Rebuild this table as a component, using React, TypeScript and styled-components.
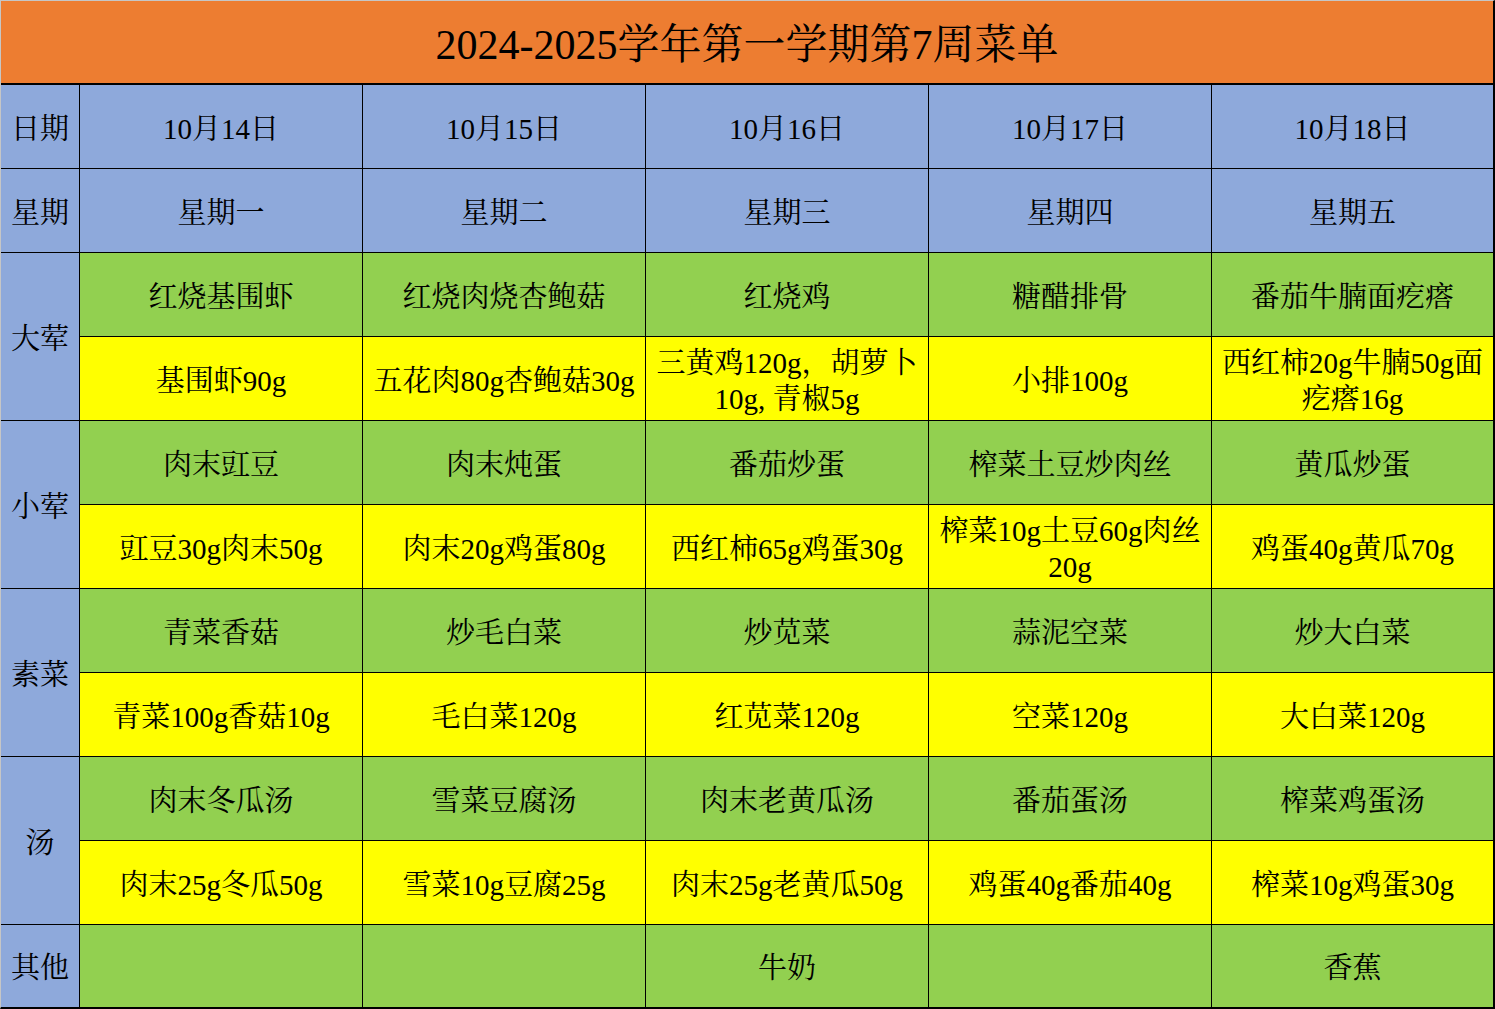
import React from "react";
import styled, { createGlobalStyle } from "styled-components";

const Global = createGlobalStyle`
  html, body { margin: 0; padding: 0; background: #ffffff; }
  body {
    font-family: "Liberation Serif", "Noto Serif CJK SC", "Noto Sans CJK SC", serif;
    color: #000;
  }
`;

const Sheet = styled.div`
  width: 1495px;
  height: 1009px;
  box-sizing: border-box;
  border-top: 1px solid #c6c6c6;
  border-left: 1px solid #c6c6c6;
  border-right: 2px solid #000;
  border-bottom: 2px solid #000;
  display: flex;
  flex-direction: column;
  overflow: hidden;
`;

const Title = styled.div`
  flex: 0 0 auto;
  height: 84px;
  box-sizing: border-box;
  border-bottom: 2px solid #000;
  background: #ed7d31;
  display: flex;
  align-items: center;
  justify-content: center;
  font-size: 42px;
  line-height: 50px;
  padding-top: 6px;
`;

const Grid = styled.div`
  display: grid;
  grid-template-columns: 78px 282px 282px 282px 282px 281px;
  grid-template-rows: repeat(10, 83px) 82px;
  gap: 1px;
  background: #000;
`;

type Tone = "blue" | "green" | "yellow";
const tones: Record<Tone, string> = {
  blue: "#8ea9db",
  green: "#92d050",
  yellow: "#ffff00",
};

const Cell = styled.div<{ $tone: Tone; $span?: number }>`
  background: ${(p) => tones[p.$tone]};
  grid-row: ${(p) => (p.$span ? `span ${p.$span}` : "auto")};
  display: flex;
  flex-direction: column;
  align-items: center;
  justify-content: center;
  text-align: center;
  font-size: 29px;
  line-height: 36px;
  padding: 4px 0 0;
  box-sizing: border-box;
  white-space: nowrap;
  overflow: hidden;
`;

const Line = styled.span`
  display: block;
`;

const Latin = styled.span`
  font-family: "Liberation Serif", "Times New Roman", serif;
`;

function Mixed({ text }: { text: string }) {
  const parts = text.split(/([\x20-\x7e]+)/).filter((s) => s.length > 0);
  return (
    <Line>
      {parts.map((p, i) =>
        /^[\x20-\x7e]+$/.test(p) ? <Latin key={i}>{p}</Latin> : <React.Fragment key={i}>{p}</React.Fragment>
      )}
    </Line>
  );
}

const days = ["10月14日", "10月15日", "10月16日", "10月17日", "10月18日"];
const weekdays = ["星期一", "星期二", "星期三", "星期四", "星期五"];

type Group = { label: string; names: string[]; details: string[][] };

const groups: Group[] = [
  {
    label: "大荤",
    names: ["红烧基围虾", "红烧肉烧杏鲍菇", "红烧鸡", "糖醋排骨", "番茄牛腩面疙瘩"],
    details: [
      ["基围虾90g"],
      ["五花肉80g杏鲍菇30g"],
      ["三黄鸡120g，胡萝卜", "10g, 青椒5g"],
      ["小排100g"],
      ["西红柿20g牛腩50g面", "疙瘩16g"],
    ],
  },
  {
    label: "小荤",
    names: ["肉末豇豆", "肉末炖蛋", "番茄炒蛋", "榨菜土豆炒肉丝", "黄瓜炒蛋"],
    details: [
      ["豇豆30g肉末50g"],
      ["肉末20g鸡蛋80g"],
      ["西红柿65g鸡蛋30g"],
      ["榨菜10g土豆60g肉丝", "20g"],
      ["鸡蛋40g黄瓜70g"],
    ],
  },
  {
    label: "素菜",
    names: ["青菜香菇", "炒毛白菜", "炒苋菜", "蒜泥空菜", "炒大白菜"],
    details: [
      ["青菜100g香菇10g"],
      ["毛白菜120g"],
      ["红苋菜120g"],
      ["空菜120g"],
      ["大白菜120g"],
    ],
  },
  {
    label: "汤",
    names: ["肉末冬瓜汤", "雪菜豆腐汤", "肉末老黄瓜汤", "番茄蛋汤", "榨菜鸡蛋汤"],
    details: [
      ["肉末25g冬瓜50g"],
      ["雪菜10g豆腐25g"],
      ["肉末25g老黄瓜50g"],
      ["鸡蛋40g番茄40g"],
      ["榨菜10g鸡蛋30g"],
    ],
  },
];

const others = ["", "", "牛奶", "", "香蕉"];

export default function App() {
  return (
    <>
      <Global />
      <Sheet>
        <Title>
          <Mixed text="2024-2025学年第一学期第7周菜单" />
        </Title>
        <Grid>
          <Cell $tone="blue">日期</Cell>
          {days.map((d) => (
            <Cell key={d} $tone="blue">
              <Mixed text={d} />
            </Cell>
          ))}
          <Cell $tone="blue">星期</Cell>
          {weekdays.map((d) => (
            <Cell key={d} $tone="blue">{d}</Cell>
          ))}
          {groups.map((g) => (
            <React.Fragment key={g.label}>
              <Cell $tone="blue" $span={2}>{g.label}</Cell>
              {g.names.map((n, i) => (
                <Cell key={`n${i}`} $tone="green">{n}</Cell>
              ))}
              {g.details.map((lines, i) => (
                <Cell key={`d${i}`} $tone="yellow">
                  {lines.map((l, j) => (
                    <Mixed key={j} text={l} />
                  ))}
                </Cell>
              ))}
            </React.Fragment>
          ))}
          <Cell $tone="blue">其他</Cell>
          {others.map((o, i) => (
            <Cell key={`o${i}`} $tone="green">{o}</Cell>
          ))}
        </Grid>
      </Sheet>
    </>
  );
}
